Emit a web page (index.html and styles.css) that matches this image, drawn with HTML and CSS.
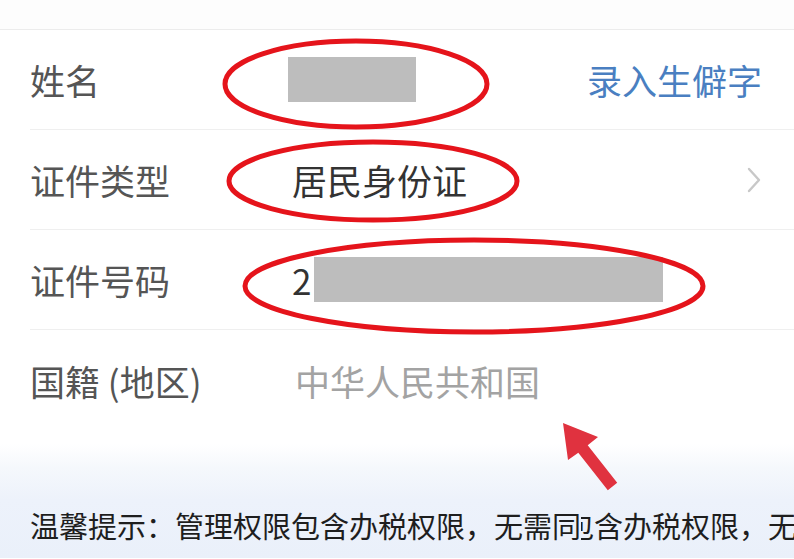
FILE: index.html
```html
<!DOCTYPE html>
<html lang="zh-CN">

<head>
    <meta charset="UTF-8">
    <meta name="viewport" content="width=device-width, initial-scale=1.0">
    <title>身份信息</title>
    <link rel="stylesheet" href="styles.css">
</head>

<body>
    <div class="page">
        <div class="top-strip"></div>

        <div class="form">
            <div class="row">
                <div class="label">姓名</div>
                <div class="value">
                    <span class="mask mask-name"></span>
                </div>
                <a class="action">录入生僻字</a>
            </div>
            <div class="row">
                <div class="label">证件类型</div>
                <div class="value">居民身份证</div>
                <svg class="chevron" width="16" height="28" viewBox="0 0 16 28">
                    <path d="M3 3 L13 14 L3 25" fill="none" stroke="#c8c8c8" stroke-width="2.4" stroke-linecap="round" stroke-linejoin="round" />
                </svg>
            </div>
            <div class="row">
                <div class="label">证件号码</div>
                <div class="value">
                    2<span class="mask mask-id"></span>
                </div>
            </div>
            <div class="row row-last">
                <div class="label">国籍 (地区)</div>
                <div class="value value-muted">中华人民共和国</div>
            </div>
        </div>

        <div class="tip">
            温馨提示：管理权限包含办税权限，无需同<span class="cut">包</span>含办税权限，无需同时勾选
        </div>

        <!-- annotations drawn over the screenshot -->
        <svg class="marks" width="794" height="559" viewBox="0 0 794 559">
            <ellipse cx="356" cy="84" rx="131" ry="43" fill="none" stroke="#e5141b" stroke-width="5" />
            <ellipse cx="373" cy="181" rx="144" ry="39" fill="none" stroke="#e5141b" stroke-width="5" />
            <ellipse cx="474" cy="286" rx="229" ry="46" fill="none" stroke="#e5141b" stroke-width="5" />
            <polygon points="563,423 598,437 587.7,445.3 617.2,482.8 607.8,490.2 578.3,452.7 568,460" fill="#e0323f" />
        </svg>
    </div>
</body>

</html>
```

FILE: styles.css
```css
*,
html,
body {
    margin: 0;
    padding: 0;
    box-sizing: border-box;
}

body {
    background-color: #ffffff;
    font-family: "Noto Sans CJK SC", "Noto Sans", sans-serif;
}

.page {
    position: relative;
    width: 794px;
    height: 559px;
    overflow: hidden;
}

.top-strip {
    height: 30px;
    background-color: #fdfdfd;
    border-bottom: 1px solid #ececec;
}

.row {
    display: flex;
    align-items: center;
    height: 100px;
    margin-left: 30px;
    padding-right: 32px;
    border-bottom: 1px solid #efefef;
}

.row-last {
    border-bottom: 0;
}

.label {
    width: 262px;
    font-size: 35px;
    color: #555555;
    white-space: nowrap;
}

.value {
    flex: 1;
    display: flex;
    align-items: center;
    font-size: 35px;
    color: #333333;
    white-space: nowrap;
}

.value-muted {
    color: #a3a3a3;
    padding-left: 3px;
}

.mask {
    display: inline-block;
    height: 45px;
    background-color: #bdbdbd;
}

.mask-name {
    width: 128px;
    margin-left: -4px;
}

.mask-id {
    width: 349px;
    margin-left: 3px;
}

.action {
    font-size: 35px;
    color: #4a7fc1;
}

.tip {
    height: 128px;
    padding: 74px 0 0 30px;
    font-size: 29px;
    color: #1e1e1e;
    white-space: nowrap;
    background: linear-gradient(#ffffff 0px, #ffffff 14px, #f5f8fc 38px, #edf2fb 70px, #eaf0fa 128px);
}

.cut {
    display: inline-block;
    width: 0.45em;
    overflow: hidden;
    direction: rtl;
    vertical-align: bottom;
}

.marks {
    position: absolute;
    top: 0;
    left: 0;
}
```
